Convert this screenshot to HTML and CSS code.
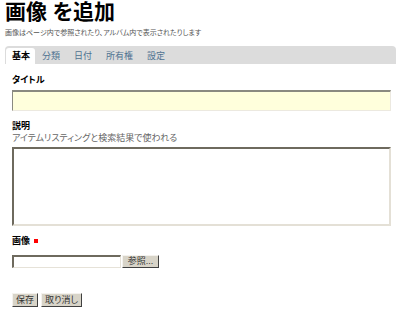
FILE: index.html
```html
<!DOCTYPE html>
<html lang="ja">
<head>
    <meta charset="UTF-8">
    <meta name="viewport" content="width=device-width, initial-scale=1.0">
    <title>画像を追加</title>
    <link rel="stylesheet" href="styles.css">
</head>
<body>
    <div class="page">
        <h1 class="title">画像 を追加</h1>
        <p class="lead">画像はページ内で参照されたり、アルバム内で表示されたりします</p>

        <ul class="tabs">
            <li class="tab active">基本</li>
            <li class="tab">分類</li>
            <li class="tab">日付</li>
            <li class="tab">所有権</li>
            <li class="tab">設定</li>
        </ul>

        <form class="form">
            <div class="field first">
                <label class="label">タイトル</label>
                <input type="text" class="text-in">
            </div>
            <div class="field">
                <label class="label">説明</label>
                <div class="help">アイテムリスティングと検索結果で使われる</div>
                <textarea class="area"></textarea>
            </div>
            <div class="field">
                <label class="label">画像 <span class="req"></span></label>
                <div class="file-row">
                    <span class="file-box"></span>
                    <span class="btn browse">参照...</span>
                </div>
            </div>
            <div class="actions">
                <span class="btn">保存</span>
                <span class="btn">取り消し</span>
            </div>
        </form>
    </div>
</body>
</html>
```

FILE: styles.css
```css
*{margin: 0;padding: 0;box-sizing: border-box;}
body{
    font-family: "Liberation Sans", "Noto Sans CJK JP", sans-serif;
    font-feature-settings: "palt";
    color: #000;
    background: #fff;
}
.page{padding: 0 4px 0 5px;}
.title{
    font-size: 21px;
    font-weight: bold;
    line-height: 24px;
}
.lead{
    font-size: 7px;
    color: #555;
    line-height: 10px;
    margin-top: 4px;
}
.tabs{
    list-style: none;
    display: flex;
    background: #dcdcdc;
    border-radius: 4px 4px 0 0;
    margin-top: 8px;
    height: 18px;
    padding: 2px 0 0 1px;
}
.tab{
    font-size: 9px;
    color: #4f7291;
    line-height: 16px;
    padding: 0 7px;
}
.tab.active{
    background: #fff;
    color: #000;
    font-weight: bold;
    border-radius: 3px 3px 0 0;
    padding: 0 5px 0 6px;
}
.form{padding: 0 5px 0 7px;}
.field{margin-top: 10px;}
.field.first{margin-top: 11px;}
.label{
    display: block;
    font-size: 9px;
    font-weight: bold;
    line-height: 11px;
}
.req{
    display: inline-block;
    width: 4px;
    height: 4px;
    background: #f00;
    margin-left: 1px;
    vertical-align: 1px;
}
.help{
    font-size: 9px;
    color: #666;
    line-height: 12px;
}
.text-in{
    display: block;
    width: 100%;
    height: 21px;
    margin-top: 4px;
    background: #ffffdc;
    border: 1px solid #ece9e0;
    border-top: 2px solid #8a8a80;
    border-left: 1px solid #8a8a80;
}
.area{
    display: block;
    width: 100%;
    height: 79px;
    margin-top: 3px;
    resize: none;
    background: #fff;
    border: 2px solid #e4e0d6;
    border-top: 2px solid #6e6a5e;
    border-left: 2px solid #6e6a5e;
}
.file-row{display: flex;margin-top: 8px;gap: 1px;}
.file-box{
    width: 109px;
    height: 13px;
    border: 1px solid #e6e2d8;
    border-top: 2px solid #6e6a5e;
    border-left: 2px solid #6e6a5e;
}
.btn{
    display: inline-block;
    font-size: 9px;
    line-height: 12px;
    height: 14px;
    padding: 0 3px;
    background: #d8d4c8;
    color: #333;
    border: 1px solid #f4f2ee;
    border-right: 1px solid #404040;
    border-bottom: 1px solid #404040;
}
.browse{width: 37px;height: 13px;line-height: 11px;text-align: center;}
.actions{margin-top: 25px;display: flex;gap: 3px;}
```
